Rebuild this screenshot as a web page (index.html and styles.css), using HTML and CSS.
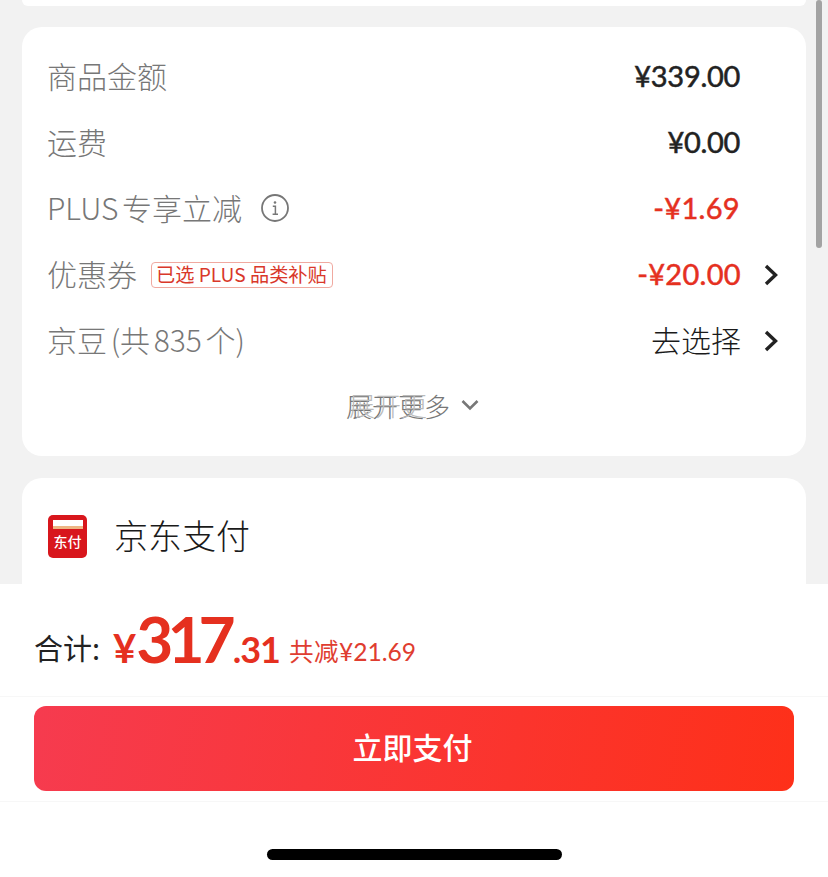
FILE: index.html
```html
<!DOCTYPE html>
<html lang="zh-CN">
<head>
  <meta charset="UTF-8">
  <title>确认订单</title>
  <link rel="stylesheet" href="styles.css">
</head>
<body>
  <div class="page">
    <div class="content">
      <div class="card card-prev"></div>

      <div class="card card-price">
        <div class="row">
          <span class="label">商品金额</span>
          <span class="amount">¥339.00</span>
        </div>
        <div class="row">
          <span class="label">运费</span>
          <span class="amount">¥0.00</span>
        </div>
        <div class="row">
          <span class="label">PLUS 专享立减</span>
          <svg class="info" width="28" height="28" viewBox="0 0 28 28" fill="none" stroke="#777" aria-hidden="true">
            <circle cx="14" cy="14" r="13" stroke-width="1.8"/>
            <circle cx="14" cy="8.5" r="1.3" fill="#777" stroke="none"/>
            <path d="M11.8 12.3H14.4V20M11.6 20.2H17" stroke-width="1.5"/>
          </svg>
          <span class="amount red">-¥1.69</span>
        </div>
        <div class="row">
          <span class="label">优惠券</span>
          <span class="tag">已选 PLUS 品类补贴</span>
          <span class="amount red">-¥20.00</span>
          <svg class="arrow" width="14" height="22" viewBox="0 0 14 22" fill="none" stroke="#222" stroke-width="3.4" aria-hidden="true">
            <path d="M2 2L11.5 11L2 20"/>
          </svg>
        </div>
        <div class="row">
          <span class="label">京豆 (共 835 个)</span>
          <span class="pick">去选择</span>
          <svg class="arrow" width="14" height="22" viewBox="0 0 14 22" fill="none" stroke="#222" stroke-width="3.4" aria-hidden="true">
            <path d="M2 2L11.5 11L2 20"/>
          </svg>
        </div>
        <div class="more">
          <span class="more-text">展开更多<span class="more-ghost">展开更</span></span>
          <svg width="18" height="12" viewBox="0 0 18 12" fill="none" stroke="#777" stroke-width="2.6" aria-hidden="true">
            <path d="M1.5 2L9 9.5L16.5 2"/>
          </svg>
        </div>
      </div>

      <div class="card card-pay">
        <div class="pay-icon">
          <div class="pay-strip"></div>
          <span class="pay-mark">东付</span>
        </div>
        <span class="pay-name">京东支付</span>
      </div>

      <div class="scrollbar"></div>
    </div>

    <div class="footer">
      <div class="total">
        <span class="total-label">合计:</span>
        <span class="total-yen">¥</span>
        <span class="total-int">317</span>
        <span class="total-dec">.31</span>
        <span class="total-off">共减¥21.69</span>
      </div>
      <div class="action">
        <button class="pay-btn">立即支付</button>
      </div>
      <div class="home-area">
        <div class="home-bar"></div>
      </div>
    </div>
  </div>
</body>
</html>
```

FILE: styles.css
```css
* {
  box-sizing: border-box;
}
body {
  margin: 0;
  background-color: #f2f2f2;
  font-family: "Noto Sans CJK SC", "Noto Sans", sans-serif;
  color: #222;
}
.page {
  display: flex;
  flex-direction: column;
  height: 877px;
  overflow: hidden;
}
.content {
  position: relative;
  height: 584px;
  padding: 0 22px;
  overflow: hidden;
}
.card {
  background-color: #fff;
  border-radius: 20px;
}
.card-prev {
  height: 6px;
  border-radius: 0 0 20px 20px;
}
.card-price {
  height: 429px;
  margin-top: 21px;
  padding: 17px 28px 0 25px;
}
.row {
  display: flex;
  align-items: center;
  height: 66px;
}
.label {
  padding-bottom: 4px;
  font-size: 30px;
  font-weight: 300;
  word-spacing: -3px;
  color: #777;
}
.amount {
  margin-left: auto;
  margin-right: 38px;
  padding-bottom: 4px;
  font-family: "Lato", "Noto Sans", sans-serif;
  font-size: 29px;
  letter-spacing: -0.3px;
  -webkit-text-stroke: 0.5px currentColor;
  color: #222;
}
.red {
  letter-spacing: 0.3px;
  color: #e5301f;
}
.amount:has(+ .arrow) {
  margin-right: 23px;
}
.pick {
  margin-left: auto;
  margin-right: 23px;
  padding-bottom: 4px;
  font-size: 30px;
  font-weight: 300;
  color: #1a1a1a;
}
.info {
  margin-left: 19px;
  margin-bottom: 2px;
}
.tag {
  margin-left: 14px;
  height: 26px;
  padding: 0 5px 0 4px;
  border: 1px solid #f0a9a0;
  border-radius: 4px;
  font-size: 19.2px;
  line-height: 22px;
  color: #d9382a;
  white-space: nowrap;
}
.more {
  display: flex;
  justify-content: center;
  align-items: center;
  gap: 11px;
  height: 62px;
  font-size: 26px;
  font-weight: 300;
  color: #777;
}
.more-text {
  position: relative;
}
.more-ghost {
  position: absolute;
  left: 3px;
  top: -1px;
  color: #bbb;
}
.card-pay {
  display: flex;
  align-items: flex-start;
  height: 200px;
  margin-top: 22px;
  padding: 37px 0 0 26px;
  gap: 27px;
}
.pay-icon {
  display: flex;
  flex-direction: column;
  align-items: center;
  width: 39px;
  height: 43px;
  padding-top: 5px;
  background-color: #d8161c;
  border-radius: 5px;
}
.pay-strip {
  width: 30px;
  height: 9px;
  background: linear-gradient(#fff 62%, #eeb684 62%);
}
.pay-mark {
  margin-top: 2px;
  font-size: 14px;
  line-height: 20px;
  font-weight: 500;
  color: #fff;
  white-space: nowrap;
}
.pay-name {
  font-size: 34px;
  font-weight: 300;
  line-height: 40px;
  color: #1a1a1a;
}
.scrollbar {
  position: absolute;
  right: 6px;
  top: 0;
  width: 6px;
  height: 248px;
  border-radius: 3px;
  background-color: #a3a3a3;
}
.footer {
  display: flex;
  flex-direction: column;
  flex: 1;
  background-color: #fff;
}
/* font-size 0 drops the white space between the inline spans */
.total {
  height: 112px;
  padding: 20px 0 0 34px;
  color: #e5301f;
  font-family: "Lato", "Noto Sans", sans-serif;
  font-size: 0;
  font-weight: 700;
  line-height: 70px;
  white-space: nowrap;
}
.total-label {
  margin-right: 13px;
  vertical-align: 3px;
  font-family: "Noto Sans CJK SC", sans-serif;
  font-size: 29px;
  font-weight: 400;
  color: #222;
}
.total-yen {
  font-size: 40px;
}
.total-int {
  font-size: 64px;
  letter-spacing: -6px;
}
.total-dec {
  margin-left: 3px;
  font-size: 36px;
  letter-spacing: -1px;
}
.total-off {
  margin-left: 9px;
  vertical-align: 2px;
  font-size: 24.6px;
  font-weight: 400;
  color: #df3d30;
}
.action {
  height: 106px;
  padding: 9px 34px 0;
  border-top: 1px solid #f7f7f7;
  border-bottom: 1px solid #f7f7f7;
}
.pay-btn {
  display: block;
  width: 100%;
  height: 85px;
  padding: 0 3px 5px 0;
  border: none;
  border-radius: 12px;
  background: linear-gradient(100deg, #f63b4f, #fe3019);
  font-family: "Noto Sans CJK SC", sans-serif;
  font-size: 30px;
  font-weight: 500;
  color: #fff;
  cursor: pointer;
}
.home-area {
  display: flex;
  justify-content: center;
  padding-top: 47px;
}
.home-bar {
  width: 295px;
  height: 11px;
  margin-right: -1px;
  border-radius: 6px;
  background-color: #000;
}
```
